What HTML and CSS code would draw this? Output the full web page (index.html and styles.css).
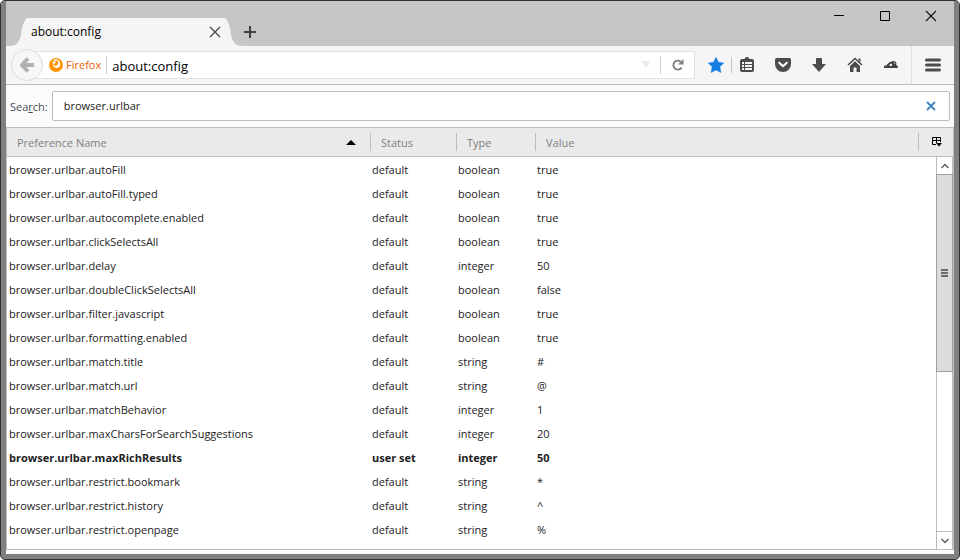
FILE: index.html
```html
<!DOCTYPE html>
<html lang="en">
<head>
<meta charset="utf-8">
<title>about:config</title>
<link rel="stylesheet" href="styles.css">
</head>
<body>
<div class="window">
  <header class="titlebar">
    <div class="tab">
      <svg class="tab-curve" viewBox="0 0 19 28" aria-hidden="true"><path d="M0 28C7 28 10 25 12 17L13 10C15 3 17 0 19 0V28Z"/></svg>
      <div class="tab-body">
        <span>about:config</span>
        <button class="plain" aria-label="Close tab"><svg width="12" height="12" viewBox="0 0 12 12"><path d="M1 1L11 11M11 1L1 11" stroke="#4c4c4c" stroke-width="1.4"/></svg></button>
      </div>
      <svg class="tab-curve flip" viewBox="0 0 19 28" aria-hidden="true"><path d="M0 28C7 28 10 25 12 17L13 10C15 3 17 0 19 0V28Z"/></svg>
    </div>
    <button class="plain new-tab" aria-label="New tab"><svg width="12" height="12" viewBox="0 0 12 12"><path d="M6 0V12M0 6H12" stroke="#3f3f3f" stroke-width="2"/></svg></button>
    <div class="window-buttons">
      <button class="plain" aria-label="Minimize"><svg width="12" height="12" viewBox="0 0 12 12"><path d="M1 5.500H11" stroke="#000"/></svg></button>
      <button class="plain" aria-label="Maximize"><svg width="12" height="12" viewBox="0 0 12 12"><path d="M1.500 1.500H10.500V10.500H1.500Z" fill="none" stroke="#000"/></svg></button>
      <button class="plain" aria-label="Close"><svg width="12" height="12" viewBox="0 0 12 12"><path d="M1 1L11 11M11 1L1 11" stroke="#111" stroke-width="1.100"/></svg></button>
    </div>
  </header>

  <nav class="toolbar">
    <button class="back" aria-label="Back"><svg width="14" height="16" viewBox="0 0 14 16"><path d="M8 1.500L2 8L8 14.500M2.500 8H14" fill="none" stroke="#b1b1b1" stroke-width="4"/></svg></button>
    <div class="urlbar">
      <span class="identity">
        <svg width="14" height="14" viewBox="0 0 14 14"><circle cx="7" cy="7" r="7" fill="#ff9500"/><path d="M5 1.500C8 .5 11 2.500 11.200 6C11.200 9.500 8.500 10.500 6.500 9.800C4.500 9 4 7.500 4.300 6L3 4.500L4.500 4Z" fill="#fff"/><path d="M6.200 2L9.300 3.500L8.800 7L6 8L4.500 6L6.500 5Z" fill="#ff9500"/></svg>
        Firefox
      </span>
      <input class="url" type="text" value="about:config" aria-label="Address">
      <svg class="history" width="10" height="8" viewBox="0 0 10 8"><path d="M0 0H10L5 7Z" fill="#ececec"/></svg>
      <button class="plain reload" aria-label="Reload"><svg width="12" height="12" viewBox="0 0 12 12"><path d="M9.600 8.600A4.500 4.500 0 1 1 8.800 2.700" fill="none" stroke="#808080" stroke-width="1.900"/><path d="M11.500 0V5.500H6Z" fill="#808080"/></svg></button>
    </div>
    <button class="plain star" aria-label="Bookmark"><svg width="16" height="16" viewBox="0 0 16 16"><path d="M8 .3L10.400 5.200L15.800 5.900L11.900 9.800L12.900 15.500L8 13L3.100 15.500L4.100 9.800L.2 5.900L5.600 5.200Z" fill="#177ee6" stroke="#177ee6" stroke-width=".5" stroke-linejoin="round"/></svg></button>
    <button class="plain tool ruled" aria-label="Show bookmarks"><svg width="16" height="16" viewBox="0 0 16 16"><path d="M3 2H5.500Q6 0 8 0Q10 0 10.500 2H13Q15 2 15 4V13Q15 15 13 15H3Q1 15 1 13V4Q1 2 3 2Z" fill="#4c4c4c"/><path d="M3 5H5V7H3ZM6 5H13V7H6ZM3 8H5V10H3ZM6 8H13V10H6ZM3 11H5V13H3ZM6 11H13V13H6Z" fill="#f5f5f5"/></svg></button>
    <button class="plain tool" aria-label="Pocket"><svg width="16" height="16" viewBox="0 0 16 16"><path d="M1.500 1H14.500Q16 1 16 2.500V7A8 8 0 0 1 0 7V2.500Q0 1 1.500 1Z" fill="#4c4c4c"/><path d="M4.200 5.700L8 9.200L11.800 5.700" fill="none" stroke="#fff" stroke-width="2" stroke-linecap="round" stroke-linejoin="round"/></svg></button>
    <button class="plain tool" aria-label="Downloads"><svg width="16" height="16" viewBox="0 0 16 16"><path d="M6 1H10Q11 1 11 2V7H15L8 15L1 7H5V2Q5 1 6 1Z" fill="#4c4c4c"/></svg></button>
    <button class="plain tool" aria-label="Home"><svg width="16" height="16" viewBox="0 0 16 16"><path d="M1 8L8 1.500L15 8" fill="none" stroke="#4c4c4c" stroke-width="1.600"/><path d="M11.500 1.500H13.500V5.500L11.500 3.500ZM3 9L8 4.300L13 9V15H9.500V10.500H6.500V15H3Z" fill="#4c4c4c"/></svg></button>
    <button class="plain tool" aria-label="Add-on"><svg width="16" height="16" viewBox="0 0 16 16"><path d="M1 9Q4 8.500 5 6.500Q6.500 4.500 9 4.500L10 4L12.500 4.500L13.500 6.500L13 7.500Q15 8.500 15 11H1Z" fill="#454545"/><path d="M6.500 9Q6.500 6.500 8 6.500Q9.500 6.500 9 9Z" fill="#f6f6f6"/><path d="M11 5.500H12.200V6.800H11Z" fill="#c8c8c8"/></svg></button>
    <button class="plain menu" aria-label="Menu"><svg width="16" height="14" viewBox="0 0 16 14"><path d="M1.500 2H14.500M1.500 7H14.500M1.500 12H14.500" stroke="#4c4c4c" stroke-width="3" stroke-linecap="round"/></svg></button>
  </nav>

  <main class="page">
    <div class="search">
      <label for="filter">Sea<u>r</u>ch:</label>
      <div class="filter-box">
        <input id="filter" type="text" value="browser.urlbar">
        <button class="plain" aria-label="Clear"><svg width="10" height="10" viewBox="0 0 10 10"><path d="M1 1L9 9M9 1L1 9" stroke="#3f7fbd" stroke-width="1.800"/></svg></button>
      </div>
    </div>
    <div class="tree">
      <table>
        <colgroup><col class="c-name"><col class="c-status"><col class="c-type"><col><col class="c-picker"></colgroup>
        <thead>
          <tr>
            <th><div class="head"><span>Preference Name</span><svg width="10" height="5" viewBox="0 0 10 5"><path d="M5 0L10 5H0Z"/></svg></div></th>
            <th><div class="head">Status</div></th>
            <th><div class="head">Type</div></th>
            <th><div class="head">Value</div></th>
            <th><div class="head"><button class="plain" aria-label="Select columns"><svg width="11" height="10" viewBox="0 0 11 10"><path d="M5 7.500H1.500V.5H9.500V5M1 3.500H10M5.500 1V6" fill="none" stroke="#000"/><path d="M5 6H11L8 9.500Z"/></svg></button></div></th>
          </tr>
        </thead>
        <tbody>
          <tr><td>browser.urlbar.autoFill</td><td>default</td><td>boolean</td><td colspan="2">true</td></tr>
          <tr><td>browser.urlbar.autoFill.typed</td><td>default</td><td>boolean</td><td colspan="2">true</td></tr>
          <tr><td>browser.urlbar.autocomplete.enabled</td><td>default</td><td>boolean</td><td colspan="2">true</td></tr>
          <tr><td>browser.urlbar.clickSelectsAll</td><td>default</td><td>boolean</td><td colspan="2">true</td></tr>
          <tr><td>browser.urlbar.delay</td><td>default</td><td>integer</td><td colspan="2">50</td></tr>
          <tr><td>browser.urlbar.doubleClickSelectsAll</td><td>default</td><td>boolean</td><td colspan="2">false</td></tr>
          <tr><td>browser.urlbar.filter.javascript</td><td>default</td><td>boolean</td><td colspan="2">true</td></tr>
          <tr><td>browser.urlbar.formatting.enabled</td><td>default</td><td>boolean</td><td colspan="2">true</td></tr>
          <tr><td>browser.urlbar.match.title</td><td>default</td><td>string</td><td colspan="2">#</td></tr>
          <tr><td>browser.urlbar.match.url</td><td>default</td><td>string</td><td colspan="2">@</td></tr>
          <tr><td>browser.urlbar.matchBehavior</td><td>default</td><td>integer</td><td colspan="2">1</td></tr>
          <tr><td>browser.urlbar.maxCharsForSearchSuggestions</td><td>default</td><td>integer</td><td colspan="2">20</td></tr>
          <tr class="user-set"><td>browser.urlbar.maxRichResults</td><td>user set</td><td>integer</td><td colspan="2">50</td></tr>
          <tr><td>browser.urlbar.restrict.bookmark</td><td>default</td><td>string</td><td colspan="2">*</td></tr>
          <tr><td>browser.urlbar.restrict.history</td><td>default</td><td>string</td><td colspan="2">^</td></tr>
          <tr><td>browser.urlbar.restrict.openpage</td><td>default</td><td>string</td><td colspan="2">%</td></tr>
        </tbody>
      </table>
      <div class="scrollbar">
        <button class="plain" aria-label="Scroll up"><svg width="8" height="6" viewBox="0 0 8 6"><path d="M.5 5L4 1.500L7.500 5" fill="none" stroke="#606060" stroke-width="1.500"/></svg></button>
        <div class="track"><div class="thumb"><svg width="7" height="8" viewBox="0 0 7 8"><path d="M0 1H7M0 4H7M0 7H7" stroke="#6b6b6b" stroke-width="2"/></svg></div></div>
        <button class="plain" aria-label="Scroll down"><svg width="8" height="6" viewBox="0 0 8 6"><path d="M.5 1L4 4.500L7.500 1" fill="none" stroke="#606060" stroke-width="1.500"/></svg></button>
      </div>
    </div>
  </main>
</div>
</body>
</html>
```
FILE: styles.css
```css
* { box-sizing: border-box; }

body {
  margin: 0;
  background: #fff;
  font: 11px/16px "Open Sans", "Noto Sans", sans-serif;
  color: #222;
}

svg { display: block; flex: none; }
input { font: inherit; color: inherit; border: 0; outline: 0; padding: 0; background: none; min-width: 0; flex: 1; }
.plain {
  display: flex;
  align-items: center;
  justify-content: center;
  padding: 0;
  border: 0;
  background: none;
}

.window {
  display: flex;
  flex-direction: column;
  height: 100vh;
  border: 1px solid #2f2f35;
  border-radius: 5px;
  box-shadow: inset 5px 0 #808080, inset -5px 0 #808080, inset 0 -5px #808080;
  padding: 0 5px 5px;
  overflow: hidden;
}

.titlebar {
  display: flex;
  align-items: flex-end;
  height: 45px;
  background: #c6c6c6;
}
.tab { display: flex; height: 28px; margin-left: 3px; font-size: 12px; color: #000; }
.tab-curve { width: 19px; height: 28px; fill: #f5f5f5; }
.flip { transform: scaleX(-1); }
.tab-body {
  display: flex;
  align-items: center;
  justify-content: space-between;
  width: 196px;
  padding: 0 3px;
  background: #f5f5f5;
}
.new-tab { width: 14px; height: 28px; }
.window-buttons { display: flex; align-self: flex-start; margin-left: auto; }
.window-buttons .plain { width: 46px; height: 30px; }

.toolbar {
  display: flex;
  align-items: center;
  height: 39px;
  padding-left: 5px;
  background: #f5f5f5;
  border-bottom: 1px solid #bdbdbd;
}
.back {
  display: flex;
  align-items: center;
  justify-content: center;
  width: 32px;
  height: 32px;
  padding: 0;
  border: 1px solid #dcdcdc;
  border-radius: 50%;
  background: #f7f7f7;
  z-index: 1;
}
.urlbar {
  display: flex;
  align-items: center;
  flex: 1;
  height: 28px;
  margin-left: -8px;
  padding-left: 13px;
  background: #fff;
  border: 1px solid #e2e2e2;
}
.identity {
  display: flex;
  align-items: center;
  gap: 3px;
  height: 18px;
  padding-right: 5px;
  border-right: 1px solid #d0d0d0;
  color: #e66000;
}
.url { font-size: 13px; padding: 1px 0 0 5px; color: #000; }
.history { margin-right: 9px; }
.reload { width: 34px; height: 18px; border-left: 1px solid #d0d0d0; }
.star { width: 36px; height: 28px; padding-left: 6px; }
.tool { width: 36px; height: 28px; }
.ruled { border-left: 1px solid #c6c6c6; height: 16px; width: 34px; padding-right: 3px; }
.menu { width: 43px; height: 38px; margin-left: 2px; border-left: 1px solid #e0e0e0; }

.page { display: flex; flex-direction: column; flex: 1; min-height: 0; background: #fbfbfb; }
.search { display: flex; align-items: center; gap: 4px; padding: 6px 4px; color: #424f5a; }
.search label { padding-top: 1px; }
.filter-box {
  display: flex;
  align-items: center;
  flex: 1;
  height: 30px;
  padding: 0 13px 0 11px;
  background: #fff;
  border: 1px solid #bdbdbd;
  border-radius: 2px;
  color: #222;
}

.tree {
  position: relative;
  flex: 1;
  min-height: 0;
  margin-bottom: 4px;
  overflow: hidden;
  background: #fff;
  border: 1px solid #bdbdbd;
}
table { width: 100%; border-collapse: separate; border-spacing: 0; table-layout: fixed; }
.c-name { width: 363px; }
.c-status { width: 86px; }
.c-type { width: 79px; }
.c-picker { width: 35px; }
th { padding: 0; height: 29px; font-weight: 400; text-align: left; color: #808080; background: #eaeaea; border-bottom: 1px solid #bdbdbd; }
.head { display: flex; align-items: center; justify-content: space-between; height: 18px; padding: 1px 14px 0 10px; }
th + th .head { border-left: 1px solid #bdbdbd; }
th:last-child .head { justify-content: center; padding: 0; }
td { height: 24px; padding: 0 2px; white-space: nowrap; }
tbody::before { content: ""; display: block; height: 1px; }
.user-set { font-weight: 700; }

.scrollbar {
  position: absolute;
  top: 29px;
  right: 0;
  bottom: 0;
  display: flex;
  flex-direction: column;
  width: 17px;
  background: #fff;
  border: solid #bdbdbd;
  border-width: 0 1px;
}
.scrollbar .plain { height: 17px; }
.track { flex: 1; border-bottom: 1px solid #bdbdbd; }
.thumb {
  display: flex;
  align-items: center;
  justify-content: center;
  height: 198px;
  margin: 0 -1px;
  background: #dcdcdc;
  border: 1px solid #a0a0a0;
}
```
